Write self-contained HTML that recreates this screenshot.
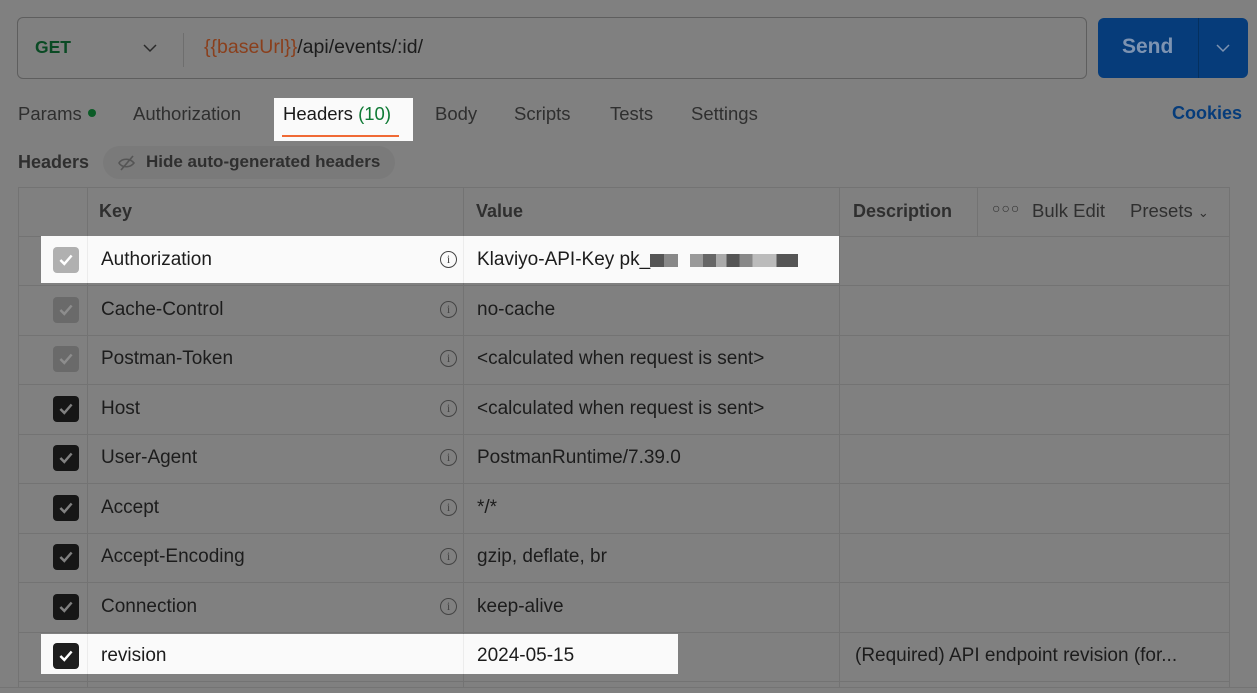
<!DOCTYPE html>
<html><head><meta charset="utf-8"><style>
*{box-sizing:border-box;margin:0;padding:0}
body{width:1257px;height:693px;background:#808080;font-family:"Liberation Sans",sans-serif;color:#1c1c1c;position:relative;overflow:hidden;font-size:19px}
.a{position:absolute;white-space:nowrap}
.t{font-size:18.5px;color:#2f2f2f}
.url{left:17px;top:17px;width:1070px;height:62px;border:1px solid #5e5e5e;border-radius:6px}
.send{left:1098px;top:18px;width:150px;height:60px;background:#063c7a;border-radius:6px}
.hl{background:#fafafa}
.cb{width:26px;height:26px;border-radius:4px;display:flex;align-items:center;justify-content:center}
.cb svg{width:18px;height:18px}
.info{width:17px;height:17px;border:1.3px solid #444;border-radius:50%;font-size:12px;text-align:center;line-height:15px;color:#444;font-family:"Liberation Serif",serif}
.vl{position:absolute;width:1px;background:#737373}
.hlin{position:absolute;height:1px;background:#737373;left:18px;width:1212px}
</style></head><body>
<div class="a url"></div>
<div class="a" style="left:35px;top:37px;font-weight:bold;color:#0a4a24;font-size:17.5px">GET</div>
<svg class="a" style="left:142px;top:42px" width="16" height="12"><path d="M2 3l6 6 6-6" stroke="#2a2a2a" stroke-width="1.5" fill="none"/></svg>
<div class="a" style="left:183px;top:33px;width:1px;height:34px;background:#6e6e6e"></div>
<div class="a" style="left:204px;top:36px;font-size:19.5px"><span style="color:#8a3f1c">{{baseUrl}}</span>/api/events/:id/</div>
<div class="a send"></div>
<div class="a" style="left:1198px;top:18px;width:1px;height:60px;background:#04305f"></div>
<div class="a" style="left:1122px;top:35px;font-weight:bold;font-size:21px;color:#7d93b1">Send</div>
<svg class="a" style="left:1215px;top:42px" width="16" height="12"><path d="M2 3l6 6 6-6" stroke="#7d93b1" stroke-width="1.5" fill="none"/></svg>

<div class="a t" style="left:18px;top:103px">Params</div>
<div class="a" style="left:88px;top:109px;width:8px;height:8px;border-radius:50%;background:#0b5b26"></div>
<div class="a t" style="left:133px;top:103px">Authorization</div>
<div class="a hl" style="left:274px;top:98px;width:139px;height:43px"></div>
<div class="a t" style="left:283px;top:103px;color:#1a1a1a">Headers <span style="color:#0f7a35">(10)</span></div>
<div class="a" style="left:282px;top:135px;width:117px;height:2px;background:#f06a35"></div>
<div class="a t" style="left:435px;top:103px">Body</div>
<div class="a t" style="left:514px;top:103px">Scripts</div>
<div class="a t" style="left:610px;top:103px">Tests</div>
<div class="a t" style="left:691px;top:103px">Settings</div>
<div class="a" style="left:1172px;top:103px;font-weight:bold;color:#063c7a;font-size:18px">Cookies</div>

<div class="a" style="left:18px;top:152px;font-weight:bold;color:#2f2f2f;font-size:18px">Headers</div>
<div class="a" style="left:103px;top:146px;width:292px;height:33px;border-radius:17px;background:#7a7a7a"></div>
<svg class="a" style="left:117px;top:154px" width="20" height="18"><path d="M2 9c3-5 11-5 15 0c-4 5-12 5-15 0z" stroke="#555" stroke-width="1.6" fill="none"/><path d="M4 16L16 2" stroke="#555" stroke-width="1.6"/></svg>
<div class="a" style="left:146px;top:152px;font-weight:bold;color:#2f2f2f;font-size:17px">Hide auto-generated headers</div>

<div class="a" style="left:18px;top:187px;width:1212px;height:500px;border:1px solid #737373;border-bottom:none"></div>
<div class="vl" style="left:87px;top:187px;height:500px"></div>
<div class="vl" style="left:463px;top:187px;height:500px"></div>
<div class="vl" style="left:839px;top:187px;height:500px"></div>
<div class="vl" style="left:977px;top:187px;height:49px"></div>
<div class="hlin" style="top:236px"></div>
<div class="hlin" style="top:285px"></div>
<div class="hlin" style="top:335px"></div>
<div class="hlin" style="top:384px"></div>
<div class="hlin" style="top:434px"></div>
<div class="hlin" style="top:483px"></div>
<div class="hlin" style="top:533px"></div>
<div class="hlin" style="top:582px"></div>
<div class="hlin" style="top:632px"></div>
<div class="hlin" style="top:681px"></div>
<div class="a" style="left:0;top:687px;width:1257px;height:1px;background:#747474"></div>

<div class="a" style="left:99px;top:201px;font-weight:bold;color:#2f2f2f;font-size:18px">Key</div>
<div class="a" style="left:476px;top:201px;font-weight:bold;color:#2f2f2f;font-size:18px">Value</div>
<div class="a" style="left:853px;top:201px;font-weight:bold;color:#2f2f2f;font-size:18px">Description</div>
<div class="a" style="left:992px;top:200px;color:#2f2f2f;letter-spacing:1px;font-size:14px">○○○</div>
<div class="a t" style="left:1032px;top:200px">Bulk Edit</div>
<div class="a t" style="left:1130px;top:200px">Presets <span style="font-size:13px">&#8964;</span></div>

<div class="a hl" style="left:41px;top:236px;width:798px;height:47px"></div>
<div class="vl" style="left:87px;top:236px;height:47px;background:#ececec"></div>
<div class="vl" style="left:463px;top:236px;height:47px;background:#ececec"></div>
<div class="a hl" style="left:41px;top:634px;width:637px;height:40px"></div>
<div class="vl" style="left:87px;top:634px;height:40px;background:#ececec"></div>
<div class="vl" style="left:463px;top:634px;height:40px;background:#ececec"></div>

<div class="a cb" style="left:53px;top:247px;background:#b0b0b0"><svg viewBox="0 0 16 16"><path d="M3 8l3.5 3.5L13 4" stroke="#fff" stroke-width="2.2" fill="none"/></svg></div>
<div class="a" style="left:101px;top:249px">Authorization</div>
<div class="a info" style="left:440px;top:251px">i</div>
<div class="a" style="left:477px;top:249px">Klaviyo-API-Key pk_</div>
<div class="a" style="left:650px;top:254px;width:28px;height:13px;background:linear-gradient(90deg,#555 0 50%,#888 50%)"></div>
<div class="a" style="left:690px;top:254px;width:108px;height:13px;background:linear-gradient(90deg,#999 0 12%,#666 12% 24%,#aaa 24% 34%,#555 34% 46%,#888 46% 58%,#bbb 58% 80%,#555 80%)"></div>

<div class="a cb" style="left:53px;top:297px;background:#6a6a6a"><svg viewBox="0 0 16 16"><path d="M3 8l3.5 3.5L13 4" stroke="#8d8d8d" stroke-width="2.2" fill="none"/></svg></div>
<div class="a" style="left:101px;top:299px">Cache-Control</div>
<div class="a info" style="left:440px;top:301px">i</div>
<div class="a" style="left:477px;top:299px">no-cache</div>

<div class="a cb" style="left:53px;top:346px;background:#6a6a6a"><svg viewBox="0 0 16 16"><path d="M3 8l3.5 3.5L13 4" stroke="#8d8d8d" stroke-width="2.2" fill="none"/></svg></div>
<div class="a" style="left:101px;top:348px">Postman-Token</div>
<div class="a info" style="left:440px;top:350px">i</div>
<div class="a" style="left:477px;top:348px">&lt;calculated when request is sent&gt;</div>

<div class="a cb" style="left:53px;top:396px;background:#161616"><svg viewBox="0 0 16 16"><path d="M3 8l3.5 3.5L13 4" stroke="#808080" stroke-width="2.2" fill="none"/></svg></div>
<div class="a" style="left:101px;top:398px">Host</div>
<div class="a info" style="left:440px;top:400px">i</div>
<div class="a" style="left:477px;top:398px">&lt;calculated when request is sent&gt;</div>

<div class="a cb" style="left:53px;top:445px;background:#161616"><svg viewBox="0 0 16 16"><path d="M3 8l3.5 3.5L13 4" stroke="#808080" stroke-width="2.2" fill="none"/></svg></div>
<div class="a" style="left:101px;top:447px">User-Agent</div>
<div class="a info" style="left:440px;top:449px">i</div>
<div class="a" style="left:477px;top:447px">PostmanRuntime/7.39.0</div>

<div class="a cb" style="left:53px;top:495px;background:#161616"><svg viewBox="0 0 16 16"><path d="M3 8l3.5 3.5L13 4" stroke="#808080" stroke-width="2.2" fill="none"/></svg></div>
<div class="a" style="left:101px;top:497px">Accept</div>
<div class="a info" style="left:440px;top:499px">i</div>
<div class="a" style="left:477px;top:497px">*/*</div>

<div class="a cb" style="left:53px;top:544px;background:#161616"><svg viewBox="0 0 16 16"><path d="M3 8l3.5 3.5L13 4" stroke="#808080" stroke-width="2.2" fill="none"/></svg></div>
<div class="a" style="left:101px;top:546px">Accept-Encoding</div>
<div class="a info" style="left:440px;top:548px">i</div>
<div class="a" style="left:477px;top:546px">gzip, deflate, br</div>

<div class="a cb" style="left:53px;top:594px;background:#161616"><svg viewBox="0 0 16 16"><path d="M3 8l3.5 3.5L13 4" stroke="#808080" stroke-width="2.2" fill="none"/></svg></div>
<div class="a" style="left:101px;top:596px">Connection</div>
<div class="a info" style="left:440px;top:598px">i</div>
<div class="a" style="left:477px;top:596px">keep-alive</div>

<div class="a cb" style="left:53px;top:643px;background:#1e1e1e"><svg viewBox="0 0 16 16"><path d="M3 8l3.5 3.5L13 4" stroke="#fff" stroke-width="2.2" fill="none"/></svg></div>
<div class="a" style="left:101px;top:645px">revision</div>
<div class="a" style="left:477px;top:645px">2024-05-15</div>
<div class="a" style="left:855px;top:645px">(Required) API endpoint revision (for...</div>
</body></html>
